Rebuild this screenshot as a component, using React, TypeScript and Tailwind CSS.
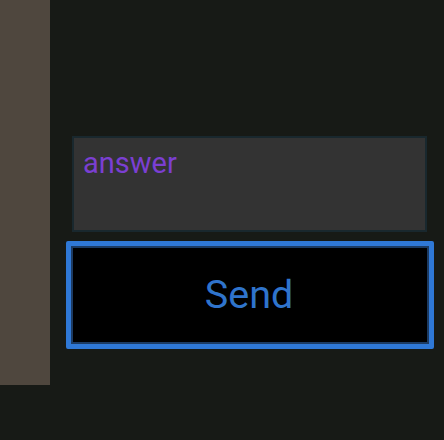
import React from "react";

export default function App() {
  return (
    <div
      className="w-[444px] h-[440px] bg-[#171a16] flex overflow-hidden"
      style={{ fontFamily: "Roboto, 'Noto Sans', sans-serif" }}
    >
      <div className="w-[50px] h-[385px] bg-[#4f473e] shrink-0" />
      <div className="flex flex-col pt-[136px]">
        <div className="ml-[22px] w-[355px] h-[96px] border-2 border-[#19282e] bg-[#333333] pl-[9px] pt-[11px]">
          <div className="text-[29px] leading-[29px] text-[#7b3fd2]">answer</div>
        </div>
        <div className="ml-[16px] mt-[9px] w-[368px] h-[108px] border-[5px] border-[#2f78d6] rounded-[2px] bg-black shadow-[inset_0_0_0_2px_#1c3b63] flex items-center justify-center">
          <span className="text-[39.5px] leading-none text-[#2f74cc] -ml-[2px]">Send</span>
        </div>
      </div>
    </div>
  );
}
